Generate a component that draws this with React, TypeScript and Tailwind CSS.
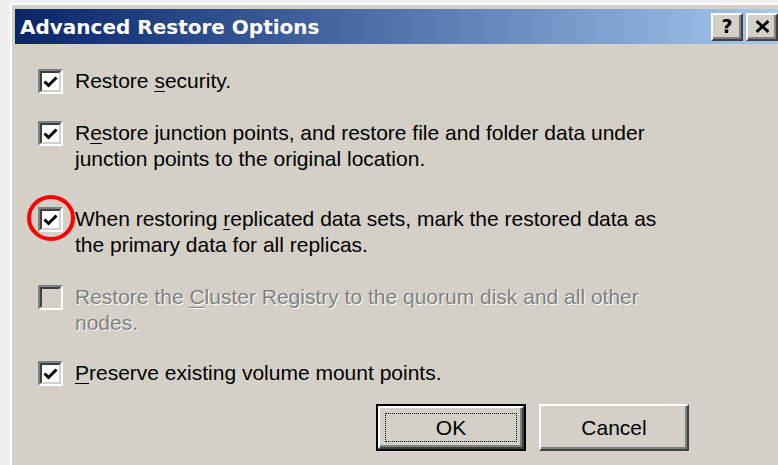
import type { ReactNode } from "react";

const body = "font-['Liberation_Sans',Arial,sans-serif] text-[21px] leading-[26px]";

// Classic raised 3D bevel used by buttons
const raised =
  "border-2 border-t-white border-l-white border-b-[#404040] border-r-[#404040] shadow-[inset_-2px_-2px_0_#808080]";

function CheckBox({ checked, disabled }: { checked?: boolean; disabled?: boolean }) {
  return (
    <div className="w-[25px] h-[25px] shrink-0 border-2 border-t-[#808080] border-l-[#808080] border-b-white border-r-white">
      <div
        className={`w-full h-full border-2 border-t-[#404040] border-l-[#404040] border-b-[#d4d0c8] border-r-[#d4d0c8] ${
          disabled ? "bg-[#d4d0c8]" : "bg-white"
        }`}
      >
        {checked && (
          <svg viewBox="0 0 17 17" className="w-[17px] h-[17px] block">
            <path d="M2.5 8.5 L6.5 12.5 L14.5 4.5" fill="none" stroke="#000" strokeWidth="3" />
          </svg>
        )}
      </div>
    </div>
  );
}

function Option({
  checked,
  disabled,
  className,
  children,
}: {
  checked?: boolean;
  disabled?: boolean;
  className?: string;
  children: ReactNode;
}) {
  return (
    <div className={`flex items-start gap-[12px] ${className ?? ""}`}>
      <div className="mt-[1px]">
        <CheckBox checked={checked} disabled={disabled} />
      </div>
      <p
        className={
          disabled
            ? "text-[#808080] [text-shadow:1px_1px_0_#ffffff]"
            : "text-black"
        }
      >
        {children}
      </p>
    </div>
  );
}

function Key({ children }: { children: ReactNode }) {
  return <span className="underline underline-offset-[3px] decoration-1">{children}</span>;
}

export default function App() {
  return (
    <div className="w-[778px] h-[465px] overflow-hidden bg-[#efefef] pl-[10px] pt-[3px]">
      <div className="w-[777px] h-[470px] bg-[#d4d0c8] border-l-2 border-t-2 border-white pl-[3px] pt-[4px]">
        {/* caption bar */}
        <div className="w-[767px] h-[35px] flex items-center justify-between pl-[5px] pr-[4px] bg-gradient-to-r from-[#0a246a] to-[#a6caf0]">
          <span className="font-['DejaVu_Sans',Verdana,sans-serif] font-bold text-[20px] text-white leading-none">
            Advanced Restore Options
          </span>
          <div className="flex gap-[3px]">
            <div className={`w-[32px] h-[28px] bg-[#d4d0c8] flex items-center justify-center ${raised}`}>
              <span className="font-['DejaVu_Sans',sans-serif] font-bold text-[19px] leading-none text-black">?</span>
            </div>
            <div className={`w-[32px] h-[28px] bg-[#d4d0c8] flex items-center justify-center ${raised}`}>
              <svg viewBox="0 0 14 12" className="w-[15px] h-[13px]">
                <path d="M1.5 1 L12.5 11 M12.5 1 L1.5 11" stroke="#000" strokeWidth="2.6" />
              </svg>
            </div>
          </div>
        </div>

        {/* options */}
        <div className={`${body} pl-[23px] pt-[24px]`}>
          <Option checked>
            Restore <Key>s</Key>ecurity.
          </Option>
          <Option checked className="mt-[26px]">
            R<Key>e</Key>store junction points, and restore file and folder data under
            <br />
            junction points to the original location.
          </Option>
          <Option checked className="mt-[34px]">
            When restoring <Key>r</Key>eplicated data sets, mark the restored data as
            <br />
            the primary data for all replicas.
          </Option>
          <Option disabled className="mt-[26px]">
            Restore the <Key>C</Key>luster Registry to the quorum disk and all other
            <br />
            nodes.
          </Option>
          <Option checked className="mt-[24px]">
            <Key>P</Key>reserve existing volume mount points.
          </Option>

          {/* dialog buttons */}
          <div className="flex gap-[13px] pl-[338px] mt-[18px]">
            <div className="w-[150px] h-[47px] border-2 border-black">
              <div className={`w-full h-full bg-[#d4d0c8] p-[5px] ${raised}`}>
                <div className="w-full h-full border border-dotted border-black flex items-center justify-center">
                  OK
                </div>
              </div>
            </div>
            <div className={`w-[150px] h-[47px] bg-[#d4d0c8] flex items-center justify-center ${raised}`}>
              Cancel
            </div>
          </div>
        </div>

        {/* highlight ring around the replicas checkbox */}
        <svg className="absolute left-[26px] top-[194px]" width="50" height="48" viewBox="0 0 50 48">
          <ellipse cx="25" cy="24" rx="22" ry="21" fill="none" stroke="#ff0000" strokeWidth="4" />
        </svg>
      </div>
    </div>
  );
}
